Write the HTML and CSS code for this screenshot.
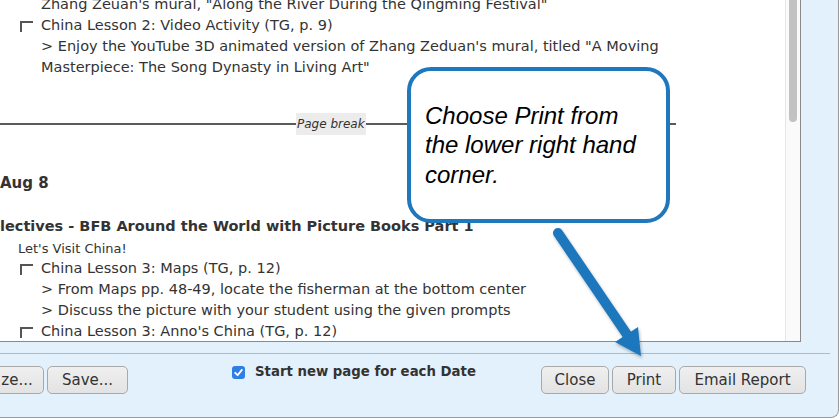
FILE: index.html
```html
<!DOCTYPE html>
<html>
<head>
<meta charset="utf-8">
<link rel="stylesheet" href="styles.css">
</head>
<body>
<div class="dialog">
  <div class="pane">
    <div class="report">
      <div class="line cont">Zhang Zeuan's mural, "Along the River During the Qingming Festival"</div>
      <div class="line item"><span class="box"></span>China Lesson 2: Video Activity (TG, p. 9)</div>
      <div class="line cont">&gt; Enjoy the YouTube 3D animated version of Zhang Zeduan's mural, titled "A Moving</div>
      <div class="line cont">Masterpiece: The Song Dynasty in Living Art"</div>
      <div class="pagebreak"><span class="rule first"></span><span class="pb-label">Page break</span><span class="rule last"></span></div>
      <div class="date">Aug 8</div>
      <div class="subject">lectives - BFB Around the World with Picture Books Part 1</div>
      <div class="section">Let's Visit China!</div>
      <div class="line item"><span class="box"></span>China Lesson 3: Maps (TG, p. 12)</div>
      <div class="line cont">&gt; From Maps pp. 48-49, locate the fisherman at the bottom center</div>
      <div class="line cont">&gt; Discuss the picture with your student using the given prompts</div>
      <div class="line item"><span class="box"></span>China Lesson 3: Anno's China (TG, p. 12)</div>
    </div>
    <div class="scrollbar"><div class="thumb"></div></div>
  </div>
  <div class="footer">
    <div class="separator"></div>
    <div class="actions">
      <div class="btn-group">
        <button class="btn btn-cut">ze...</button>
        <button class="btn btn-save">Save...</button>
      </div>
      <label class="option">
        <svg class="check" width="13" height="13" viewBox="0 0 13 13"><rect x="0" y="0" width="13" height="13" rx="3" fill="#2f7ee6"/><path d="M3.2 6.8 L5.6 9.2 L9.9 3.9" fill="none" stroke="#fff" stroke-width="1.8" stroke-linecap="round" stroke-linejoin="round"/></svg>
        <span>Start new page for each Date</span>
      </label>
      <div class="btn-group right">
        <button class="btn btn-close">Close</button>
        <button class="btn btn-print">Print</button>
        <button class="btn btn-email">Email Report</button>
      </div>
    </div>
  </div>
</div>
<div class="callout"><p>Choose Print from the lower right hand corner.</p></div>
<svg class="arrow" width="130" height="150" viewBox="0 0 130 150">
  <defs>
    <filter id="sh" x="-20%" y="-20%" width="140%" height="140%">
      <feDropShadow dx="1" dy="2" stdDeviation="1.5" flood-color="#000" flood-opacity="0.3"/>
    </filter>
  </defs>
  <g filter="url(#sh)">
    <line x1="18" y1="13" x2="88" y2="116" stroke="#1f77bc" stroke-width="10" stroke-linecap="round"/>
    <polygon points="98,107 101,136 75,122" fill="#1f77bc"/>
  </g>
</svg>
</body>
</html>
```
FILE: styles.css
```css
html, body {
  margin: 0;
  padding: 0;
}
body {
  width: 840px;
  height: 420px;
  overflow: hidden;
  background: #ffffff;
  position: relative;
  font-family: "DejaVu Sans", Verdana, sans-serif;
  color: #333;
}
.dialog {
  width: 838px;
  height: 417px;
  background: #e3f1fc;
  border-right: 1px solid #9a9a9a;
  border-bottom: 1px solid #9a9a9a;
  border-bottom-right-radius: 8px;
  display: flex;
  flex-direction: column;
}
.pane {
  width: 800px;
  height: 341px;
  background: #fff;
  border-right: 1px solid #8a8a8a;
  border-bottom: 1px solid #8a8a8a;
  display: flex;
  overflow: hidden;
}
.report {
  flex: 1;
  margin-top: -6px;
  overflow: hidden;
  font-size: 14.5px;
}
.line {
  height: 21px;
  line-height: 21px;
  white-space: nowrap;
}
.cont {
  padding-left: 41px;
}
.item {
  display: flex;
  padding-left: 20px;
}
.box {
  width: 11px;
  height: 9px;
  border-top: 2px solid #555;
  border-left: 2px solid #555;
  margin-top: 6px;
  margin-right: 8px;
  flex: none;
}
.pagebreak {
  margin-top: 35px;
  height: 22px;
  display: flex;
  align-items: center;
  width: 676px;
}
.rule {
  height: 2px;
  background: #5a5a5a;
  flex: 1;
}
.rule.first {
  flex: none;
  width: 296px;
}
.pb-label {
  height: 22px;
  line-height: 22px;
  background: #ececec;
  font-size: 12px;
  font-style: italic;
  padding: 0 1px;
  color: #333;
}
.date {
  margin-top: 37px;
  font-size: 15px;
  font-weight: bold;
  line-height: 22px;
  height: 22px;
}
.subject {
  margin-top: 22px;
  font-size: 14.5px;
  font-weight: bold;
  line-height: 20px;
  height: 20px;
  white-space: nowrap;
}
.section {
  padding-left: 18px;
  padding-top: 3px;
  font-size: 13px;
  line-height: 19px;
  height: 19px;
}
.scrollbar {
  width: 15px;
  flex: none;
  background: #fafafa;
  border-left: 1px solid #e6e6e6;
  box-sizing: border-box;
  padding-left: 3px;
}
.thumb {
  width: 8px;
  height: 122px;
  background: #c2c2c2;
  border-radius: 0 0 4px 4px;
}
.footer {
  flex: 1;
  padding-top: 11px;
}
.separator {
  height: 1px;
  background: #b8b8b8;
  margin-right: 8px;
}
.actions {
  display: flex;
  align-items: flex-start;
  margin-top: 12px;
  padding-right: 32px;
}
.btn-group {
  display: flex;
  gap: 3px;
}
.btn-group.right {
  margin-left: auto;
}
.btn {
  height: 28px;
  padding: 0;
  border: 1px solid #a9a9a9;
  border-radius: 5px;
  background: linear-gradient(#efefef, #e3e3e3);
  font-family: "DejaVu Sans", Verdana, sans-serif;
  font-size: 15px;
  color: #333;
  text-align: center;
}
.btn-cut {
  margin-left: -16px;
  width: 60px;
  padding-left: 6px;
}
.btn-save {
  width: 81px;
}
.btn-close {
  width: 68px;
}
.btn-print {
  width: 64px;
}
.btn-email {
  width: 127px;
}
.option {
  display: flex;
  align-items: flex-start;
  margin-left: 104px;
  margin-top: -1px;
  font-size: 13.3px;
  font-weight: bold;
  color: #333;
  line-height: 14px;
}
.check {
  margin-top: 1px;
  margin-right: 10px;
  flex: none;
}
.callout {
  position: absolute;
  left: 407px;
  top: 67px;
  width: 263px;
  height: 156px;
  box-sizing: border-box;
  border: 4px solid #1f77bc;
  border-radius: 24px;
  background: #fff;
  display: flex;
  align-items: center;
  padding-left: 14px;
  padding-right: 8px;
}
.callout p {
  margin: 0;
  font-family: "Liberation Sans", Arial, sans-serif;
  font-style: italic;
  font-size: 24px;
  line-height: 29.5px;
  color: #000;
}
.arrow {
  position: absolute;
  left: 540px;
  top: 220px;
}
```
